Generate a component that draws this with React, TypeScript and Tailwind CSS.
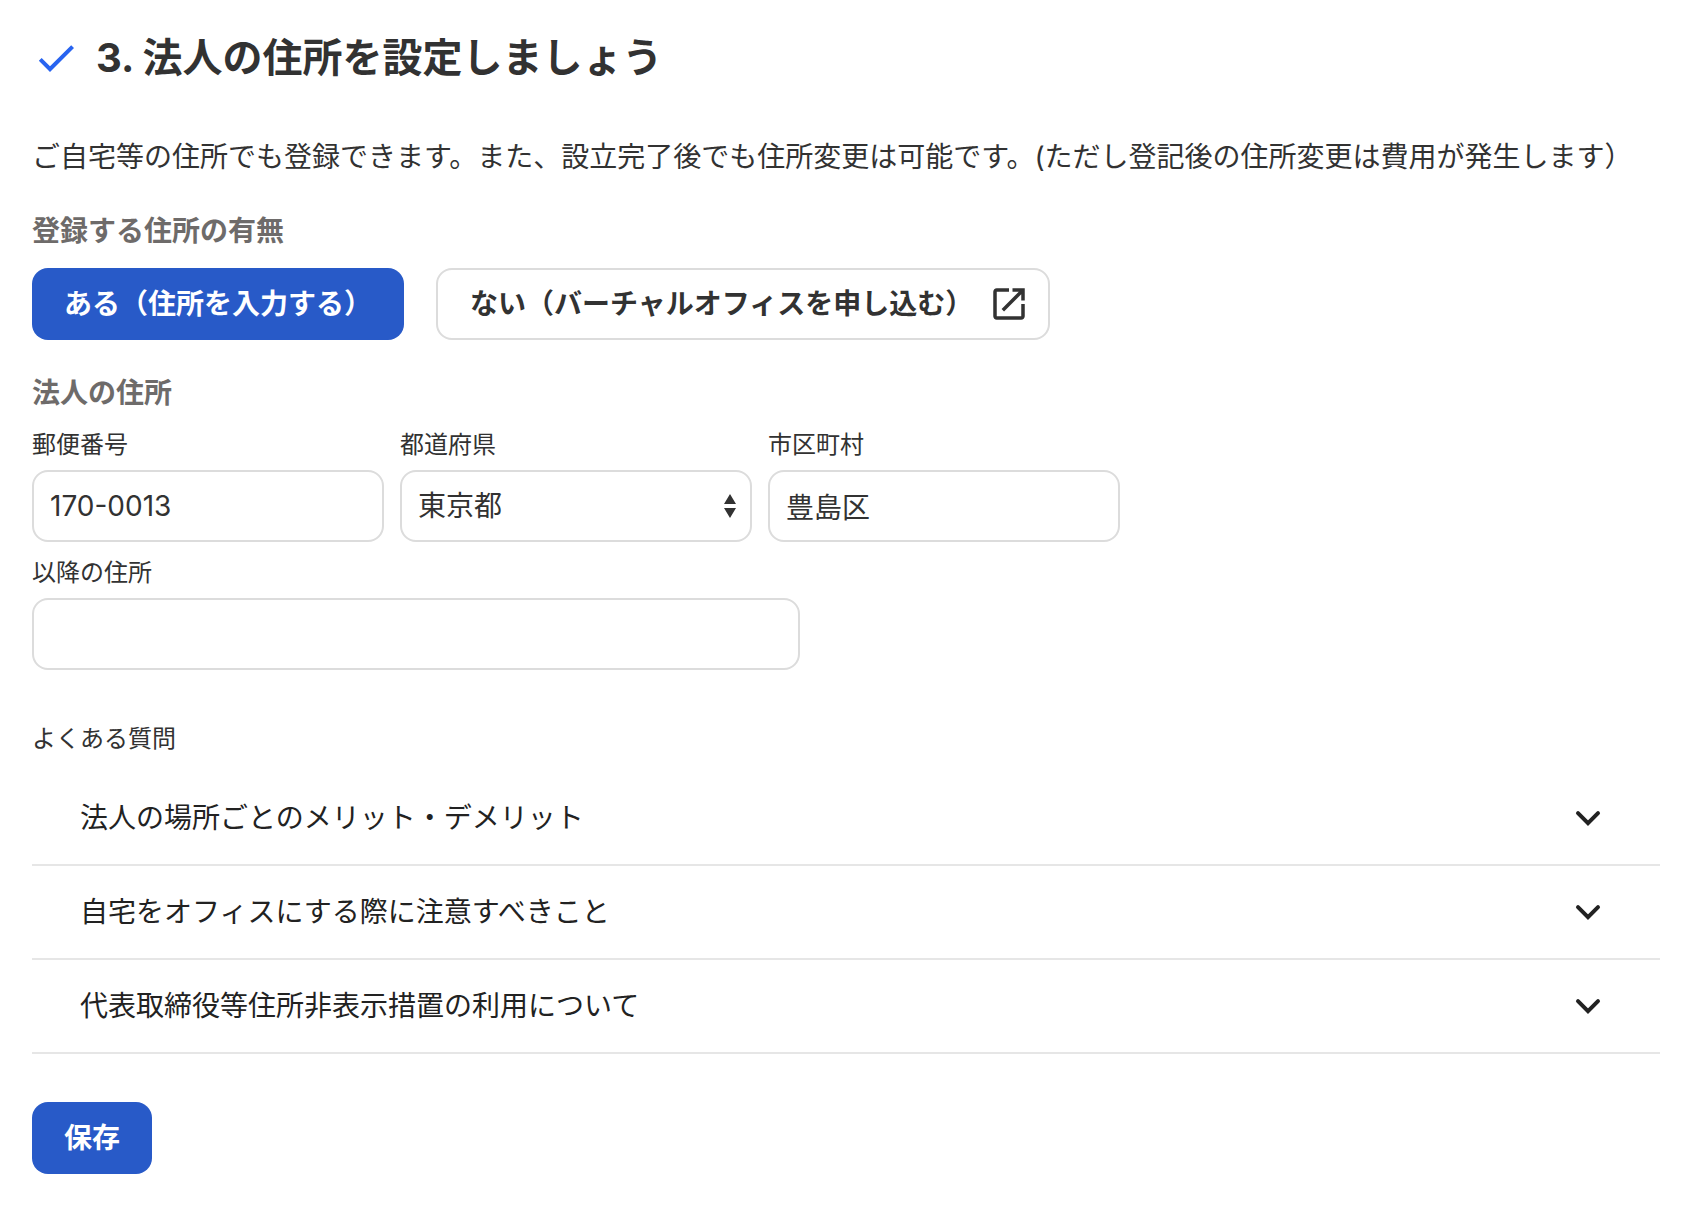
import {
  type ReactNode,
  useId,
  useState,
} from "react";

const prefectures = [
  "東京都",
  "神奈川県",
  "埼玉県",
  "千葉県",
  "大阪府",
];

const questions = [
  "法人の場所ごとのメリット・デメリット",
  "自宅をオフィスにする際に注意すべきこと",
  "代表取締役等住所非表示措置の利用について",
];

export default function App() {
  const [postalCode, setPostalCode] =
    useState("170-0013");
  const [prefecture, setPrefecture] =
    useState("東京都");
  const [city, setCity] =
    useState("豊島区");
  const [street, setStreet] =
    useState("");

  return (
    <main className="bg-white pt-8 pr-[38px] pb-8 pl-8 font-['Inter','Noto_Sans_CJK_JP',sans-serif] text-[28px] leading-[46px] text-[#323232]">
      <header className="flex items-center gap-4">
        <CheckIcon />
        <h1 className="text-[40px] leading-[52px] font-bold">
          3. 法人の住所を設定しましょう
        </h1>
      </header>

      <form
        onSubmit={(event) =>
          event.preventDefault()
        }
      >
        <p className="mt-[50px]">
          ご自宅等の住所でも登録できます。また、設立完了後でも住所変更は可能です。(ただし登記後の住所変更は費用が発生します）
        </p>

        <section className="mt-7">
          <SectionTitle>
            登録する住所の有無
          </SectionTitle>

          <div className="mt-3.5 flex flex-wrap gap-8">
            <button
              type="button"
              className={primaryButtonClassName}
            >
              ある（住所を入力する）
            </button>

            <button
              type="button"
              className="flex h-[72px] items-center gap-[15px] rounded-2xl border-2 border-[#dcdcdc] bg-white pr-[18px] pl-8 font-bold"
            >
              ない（バーチャルオフィスを申し込む）
              <OpenInNewIcon />
            </button>
          </div>
        </section>

        <section className="mt-[30px]">
          <SectionTitle>
            法人の住所
          </SectionTitle>

          <div className="mt-2.5 flex flex-wrap gap-4">
            <Field label="郵便番号">
              {(id) => (
                <input
                  id={id}
                  value={postalCode}
                  onChange={(event) =>
                    setPostalCode(
                      event.target.value,
                    )
                  }
                  className={`${controlClassName} w-[352px]`}
                />
              )}
            </Field>

            <Field label="都道府県">
              {(id) => (
                <div className="relative">
                  <select
                    id={id}
                    value={prefecture}
                    onChange={(event) =>
                      setPrefecture(
                        event.target.value,
                      )
                    }
                    className={`${controlClassName} w-[352px] appearance-none`}
                  >
                    {prefectures.map((name) => (
                      <option
                        key={name}
                        value={name}
                      >
                        {name}
                      </option>
                    ))}
                  </select>
                  <SelectArrows />
                </div>
              )}
            </Field>

            <Field label="市区町村">
              {(id) => (
                <input
                  id={id}
                  value={city}
                  onChange={(event) =>
                    setCity(event.target.value)
                  }
                  className={`${controlClassName} w-[352px]`}
                />
              )}
            </Field>
          </div>

          <div className="mt-3">
            <Field label="以降の住所">
              {(id) => (
                <input
                  id={id}
                  value={street}
                  onChange={(event) =>
                    setStreet(event.target.value)
                  }
                  className={`${controlClassName} w-[768px] max-w-full`}
                />
              )}
            </Field>
          </div>
        </section>

        <section className="mt-[50px]">
          <h2 className="text-2xl leading-[38px]">
            よくある質問
          </h2>

          <ul className="mt-3.5 text-[#222222]">
            {questions.map((question) => (
              <li
                key={question}
                className="border-b-2 border-[#e6e6e6]"
              >
                <button
                  type="button"
                  aria-expanded="false"
                  className="flex w-full items-center justify-between px-12 py-[22px] text-left"
                >
                  {question}
                  <ChevronIcon />
                </button>
              </li>
            ))}
          </ul>
        </section>

        <button
          type="submit"
          className={`${primaryButtonClassName} mt-12`}
        >
          保存
        </button>
      </form>
    </main>
  );
}

function SectionTitle({
  children,
}: {
  children: ReactNode;
}) {
  return (
    <h2 className="font-bold text-[#6e6b6a]">
      {children}
    </h2>
  );
}

function Field({
  label,
  children,
}: {
  label: string;
  children: (id: string) => ReactNode;
}) {
  const id = useId();

  return (
    <div>
      <label
        htmlFor={id}
        className="mb-1.5 block text-2xl leading-[38px]"
      >
        {label}
      </label>
      {children(id)}
    </div>
  );
}

function CheckIcon() {
  return (
    <svg
      viewBox="0 0 24 24"
      className="size-12 shrink-0 fill-[#2864f0]"
      aria-hidden="true"
    >
      <path d="M9 16.17 4.83 12l-1.42 1.41L9 19 21 7l-1.41-1.41z" />
    </svg>
  );
}

function OpenInNewIcon() {
  return (
    <svg
      viewBox="0 0 24 24"
      className="size-[42px] shrink-0 fill-current"
      aria-hidden="true"
    >
      <path d="M19 19H5V5h7V3H5c-1.11 0-2 .9-2 2v14c0 1.1.89 2 2 2h14c1.1 0 2-.9 2-2v-7h-2v7zM14 3v2h3.59l-9.83 9.83 1.41 1.41L19 6.41V10h2V3h-7z" />
    </svg>
  );
}

function SelectArrows() {
  return (
    <svg
      viewBox="0 0 12 24"
      className="pointer-events-none absolute top-6 right-4 h-6 w-3 fill-current"
      aria-hidden="true"
    >
      <path d="M6 0l6 10H0zM6 24l6-10H0z" />
    </svg>
  );
}

function ChevronIcon() {
  return (
    <svg
      viewBox="0 0 24 24"
      className="size-12 shrink-0 fill-none stroke-current stroke-2"
      strokeLinecap="round"
      aria-hidden="true"
    >
      <path d="M7 9.600l5 5 5-5" />
    </svg>
  );
}

const primaryButtonClassName =
  "h-[72px] rounded-2xl bg-[#285ac8] px-8 font-bold text-white";

const controlClassName = [
  "block h-[72px] rounded-2xl",
  "border-2 border-[#dcdcdc] bg-white",
  "px-4 outline-none",
  "focus:border-[#285ac8]",
].join(" ");
